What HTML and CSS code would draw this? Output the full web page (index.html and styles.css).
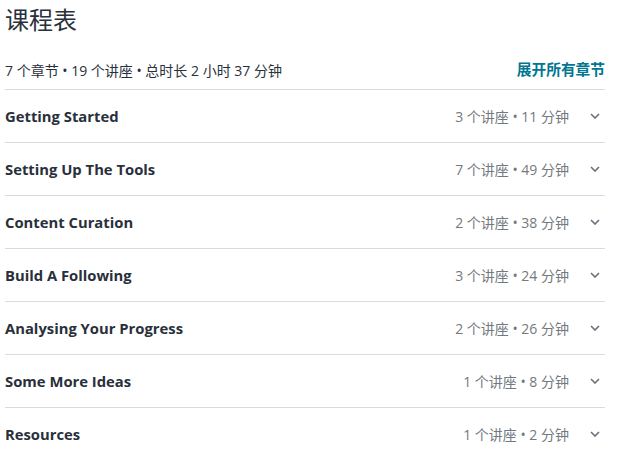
FILE: index.html
```html
<!DOCTYPE html>
<html lang="zh">
<head>
<meta charset="utf-8">
<title>课程表</title>
<link rel="stylesheet" href="styles.css">
</head>
<body>
<div class="curriculum">
  <h2 class="heading">课程表</h2>
  <div class="summary">
    <span class="stats">7 个章节 • 19 个讲座 • 总时长 2 小时 37 分钟</span>
    <a class="expand" href="#">展开所有章节</a>
  </div>
  <div class="sections">
    <div class="row"><span class="name">Getting Started</span><span class="meta">3 个讲座 • 11 分钟</span><svg class="chev" viewBox="0 0 10 6"><path d="M1 1l4 4 4-4"/></svg></div>
    <div class="row"><span class="name">Setting Up The Tools</span><span class="meta">7 个讲座 • 49 分钟</span><svg class="chev" viewBox="0 0 10 6"><path d="M1 1l4 4 4-4"/></svg></div>
    <div class="row"><span class="name">Content Curation</span><span class="meta">2 个讲座 • 38 分钟</span><svg class="chev" viewBox="0 0 10 6"><path d="M1 1l4 4 4-4"/></svg></div>
    <div class="row"><span class="name">Build A Following</span><span class="meta">3 个讲座 • 24 分钟</span><svg class="chev" viewBox="0 0 10 6"><path d="M1 1l4 4 4-4"/></svg></div>
    <div class="row"><span class="name">Analysing Your Progress</span><span class="meta">2 个讲座 • 26 分钟</span><svg class="chev" viewBox="0 0 10 6"><path d="M1 1l4 4 4-4"/></svg></div>
    <div class="row"><span class="name">Some More Ideas</span><span class="meta">1 个讲座 • 8 分钟</span><svg class="chev" viewBox="0 0 10 6"><path d="M1 1l4 4 4-4"/></svg></div>
    <div class="row"><span class="name">Resources</span><span class="meta">1 个讲座 • 2 分钟</span><svg class="chev" viewBox="0 0 10 6"><path d="M1 1l4 4 4-4"/></svg></div>
  </div>
</div>
</body>
</html>
```
FILE: styles.css
```css
html, body {
  margin: 0;
  padding: 0;
  background: #fff;
}
body {
  font-family: "Open Sans", "Noto Sans CJK SC", sans-serif;
  color: #29303b;
}
.curriculum {
  width: 600px;
  margin-left: 5px;
}
.heading {
  margin: 0;
  padding-top: 4px;
  font-size: 24px;
  font-weight: 400;
  line-height: 32px;
  color: #29303b;
}
.summary {
  display: flex;
  justify-content: space-between;
  align-items: center;
  height: 53px;
  border-bottom: 1px solid #dedcd2;
  font-size: 14px;
}
.stats {
  color: #29303b;
  padding-top: 14px;
}
.expand {
  color: #007791;
  font-weight: 700;
  text-decoration: none;
  font-size: 14.7px;
  padding-top: 12px;
}
.row {
  display: flex;
  align-items: center;
  height: 52px;
  border-bottom: 1px solid #dedcd2;
}
.name {
  flex: 1;
  font-size: 14.8px;
  font-weight: 700;
  color: #29303b;
}
.meta {
  font-size: 14px;
  color: #737980;
  margin-right: 21px;
}
.chev {
  width: 10px;
  height: 6px;
  margin-right: 5px;
  fill: none;
  stroke: #686f7a;
  stroke-width: 1.6;
}
```
